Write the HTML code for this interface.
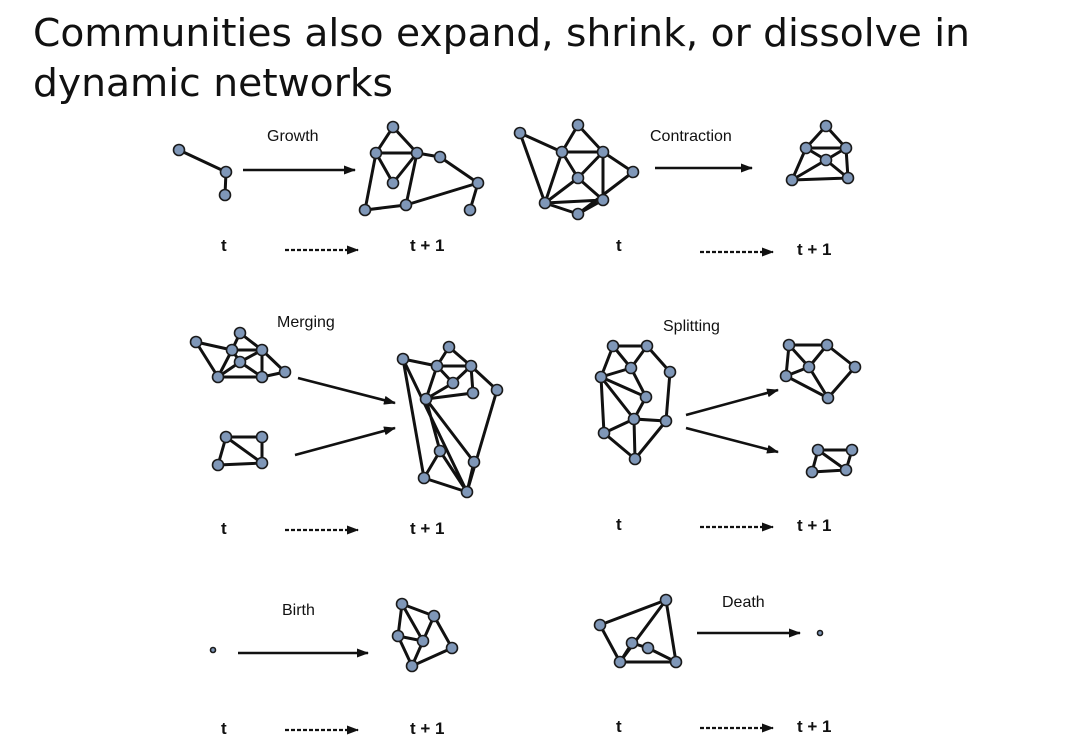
<!DOCTYPE html>
<html><head><meta charset="utf-8"><style>
html,body{margin:0;padding:0;background:#fff;width:1080px;height:753px;overflow:hidden}
svg{display:block}
.e{stroke:#111;stroke-width:3;fill:none;stroke-linecap:round;stroke-linejoin:round}
.n circle{fill:#7f97b8;stroke:#1a1a1a;stroke-width:1.6}
.l{font-family:"Liberation Sans",sans-serif;font-size:16px;fill:#111}
.t{font-family:"Liberation Sans",sans-serif;font-size:17px;font-weight:bold;fill:#111}
.d{stroke:#111;stroke-width:2.2;stroke-dasharray:4 2}
</style></head><body>
<svg width="1080" height="753" viewBox="0 0 1080 753">
<defs><marker id="a" markerWidth="12" markerHeight="9" refX="11" refY="4.5" orient="auto" markerUnits="userSpaceOnUse"><path d="M0,0L12,4.5L0,9z" fill="#111"/></marker></defs>
<text x="33" y="46" font-family="DejaVu Sans, sans-serif" font-size="38" fill="#111" textLength="937" lengthAdjust="spacingAndGlyphs">Communities also expand, shrink, or dissolve in</text>
<text x="33" y="96" font-family="DejaVu Sans, sans-serif" font-size="38" fill="#111" textLength="360" lengthAdjust="spacingAndGlyphs">dynamic networks</text>

<text class="l" x="267" y="141">Growth</text>
<text class="l" x="650" y="141">Contraction</text>
<text class="l" x="277" y="327">Merging</text>
<text class="l" x="663" y="331">Splitting</text>
<text class="l" x="282" y="615">Birth</text>
<text class="l" x="722" y="607">Death</text>

<g class="t">
<text x="221" y="251">t</text><text x="410" y="251">t + 1</text>
<text x="616" y="251">t</text><text x="797" y="255">t + 1</text>
<text x="221" y="534">t</text><text x="410" y="534">t + 1</text>
<text x="616" y="530">t</text><text x="797" y="531">t + 1</text>
<text x="221" y="734">t</text><text x="410" y="734">t + 1</text>
<text x="616" y="732">t</text><text x="797" y="732">t + 1</text>
</g>
<g class="d" marker-end="url(#a)">
<line x1="285" y1="250" x2="358" y2="250"/><line x1="700" y1="252" x2="773" y2="252"/>
<line x1="285" y1="530" x2="358" y2="530"/><line x1="700" y1="527" x2="773" y2="527"/>
<line x1="285" y1="730" x2="358" y2="730"/><line x1="700" y1="728" x2="773" y2="728"/>
</g>
<g stroke="#111" stroke-width="2.6" marker-end="url(#a)">
<line x1="243" y1="170" x2="355" y2="170"/>
<line x1="655" y1="168" x2="752" y2="168"/>
<line x1="298" y1="378" x2="395" y2="403"/>
<line x1="295" y1="455" x2="395" y2="428"/>
<line x1="686" y1="415" x2="778" y2="390"/>
<line x1="686" y1="428" x2="778" y2="452"/>
<line x1="238" y1="653" x2="368" y2="653"/>
<line x1="697" y1="633" x2="800" y2="633"/>
</g>

<path class="e" d="M179,150L226,172L225,195
M393,127L376,153M393,127L417,153M376,153L417,153L440,157M376,153L365,210M376,153L393,183L417,153L406,205M365,210L406,205L478,183M440,157L478,183L470,210
M520,133L562,152L578,125L603,152L562,152L578,178L603,152M562,152L545,203M520,133L545,203L578,178L603,200M545,203L603,200M603,152L603,200M603,152L633,172L578,214L603,200M545,203L578,214
M826,126L806,148L846,148L826,126M806,148L826,160L846,148M826,160L792,180M826,160L848,178M806,148L792,180L848,178L846,148
M196,342L232,350L240,333L262,350L232,350L218,377L196,342M232,350L240,362L262,350L262,377M240,362L262,377L285,372L262,350M218,377L262,377M218,377L240,362
M226,437L262,437L262,463L218,465L226,437L262,463
M403,359L437,366L449,347L471,366L437,366L453,383L471,366L473,393M437,366L426,399L453,383M426,399L473,393M471,366L497,390L467,492M403,359L424,478M403,359L467,492M426,399L440,451M426,399L474,462M440,451L424,478L467,492L440,451M474,462L467,492
M613,346L647,346L631,368L613,346L601,377L631,368L646,397L601,377M647,346L670,372L666,421L634,419L646,397M601,377L634,419M601,377L604,433L634,419L635,459L604,433M666,421L635,459
M789,345L827,345L809,367L789,345L786,376L809,367L828,398L855,367L827,345M786,376L828,398
M818,450L852,450L846,470L812,472L818,450L846,470
M402,604L434,616L452,648L412,666L398,636L402,604L423,641L434,616M398,636L423,641L412,666
M600,625L666,600L620,662L600,625M666,600L676,662L620,662L632,643L648,648L676,662"/>

<g class="n">
<circle cx="179" cy="150" r="5.5"/><circle cx="226" cy="172" r="5.5"/><circle cx="225" cy="195" r="5.5"/>
<circle cx="393" cy="127" r="5.5"/><circle cx="376" cy="153" r="5.5"/><circle cx="417" cy="153" r="5.5"/><circle cx="440" cy="157" r="5.5"/><circle cx="365" cy="210" r="5.5"/><circle cx="393" cy="183" r="5.5"/><circle cx="406" cy="205" r="5.5"/><circle cx="478" cy="183" r="5.5"/><circle cx="470" cy="210" r="5.5"/>
<circle cx="520" cy="133" r="5.5"/><circle cx="578" cy="125" r="5.5"/><circle cx="562" cy="152" r="5.5"/><circle cx="603" cy="152" r="5.5"/><circle cx="578" cy="178" r="5.5"/><circle cx="545" cy="203" r="5.5"/><circle cx="603" cy="200" r="5.5"/><circle cx="633" cy="172" r="5.5"/><circle cx="578" cy="214" r="5.5"/>
<circle cx="826" cy="126" r="5.5"/><circle cx="806" cy="148" r="5.5"/><circle cx="846" cy="148" r="5.5"/><circle cx="826" cy="160" r="5.5"/><circle cx="792" cy="180" r="5.5"/><circle cx="848" cy="178" r="5.5"/>
<circle cx="196" cy="342" r="5.5"/><circle cx="240" cy="333" r="5.5"/><circle cx="232" cy="350" r="5.5"/><circle cx="262" cy="350" r="5.5"/><circle cx="240" cy="362" r="5.5"/><circle cx="218" cy="377" r="5.5"/><circle cx="262" cy="377" r="5.5"/><circle cx="285" cy="372" r="5.5"/>
<circle cx="226" cy="437" r="5.5"/><circle cx="262" cy="437" r="5.5"/><circle cx="218" cy="465" r="5.5"/><circle cx="262" cy="463" r="5.5"/>
<circle cx="403" cy="359" r="5.5"/><circle cx="449" cy="347" r="5.5"/><circle cx="437" cy="366" r="5.5"/><circle cx="471" cy="366" r="5.5"/><circle cx="453" cy="383" r="5.5"/><circle cx="473" cy="393" r="5.5"/><circle cx="497" cy="390" r="5.5"/><circle cx="426" cy="399" r="5.5"/><circle cx="440" cy="451" r="5.5"/><circle cx="474" cy="462" r="5.5"/><circle cx="424" cy="478" r="5.5"/><circle cx="467" cy="492" r="5.5"/>
<circle cx="613" cy="346" r="5.5"/><circle cx="647" cy="346" r="5.5"/><circle cx="631" cy="368" r="5.5"/><circle cx="670" cy="372" r="5.5"/><circle cx="601" cy="377" r="5.5"/><circle cx="646" cy="397" r="5.5"/><circle cx="634" cy="419" r="5.5"/><circle cx="666" cy="421" r="5.5"/><circle cx="604" cy="433" r="5.5"/><circle cx="635" cy="459" r="5.5"/>
<circle cx="789" cy="345" r="5.5"/><circle cx="827" cy="345" r="5.5"/><circle cx="809" cy="367" r="5.5"/><circle cx="855" cy="367" r="5.5"/><circle cx="786" cy="376" r="5.5"/><circle cx="828" cy="398" r="5.5"/>
<circle cx="818" cy="450" r="5.5"/><circle cx="852" cy="450" r="5.5"/><circle cx="846" cy="470" r="5.5"/><circle cx="812" cy="472" r="5.5"/>
<circle cx="213" cy="650" r="2.5"/>
<circle cx="402" cy="604" r="5.5"/><circle cx="434" cy="616" r="5.5"/><circle cx="398" cy="636" r="5.5"/><circle cx="423" cy="641" r="5.5"/><circle cx="412" cy="666" r="5.5"/><circle cx="452" cy="648" r="5.5"/>
<circle cx="666" cy="600" r="5.5"/><circle cx="600" cy="625" r="5.5"/><circle cx="632" cy="643" r="5.5"/><circle cx="648" cy="648" r="5.5"/><circle cx="620" cy="662" r="5.5"/><circle cx="676" cy="662" r="5.5"/>
<circle cx="820" cy="633" r="2.5"/>
</g>
</svg>
</body></html>
